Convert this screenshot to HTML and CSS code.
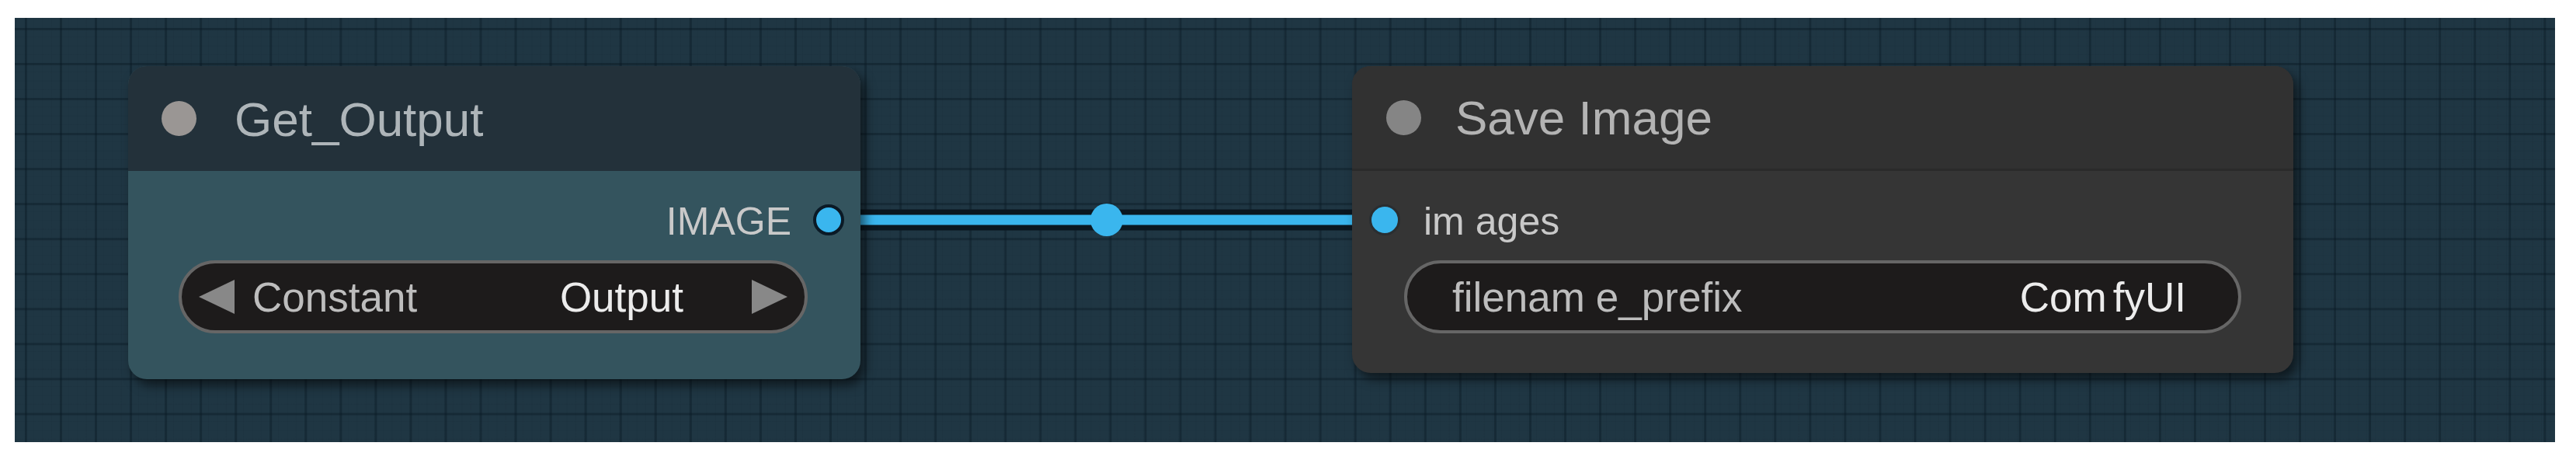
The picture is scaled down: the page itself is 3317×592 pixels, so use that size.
FILE: index.html
```html
<!DOCTYPE html>
<html>
<head>
<meta charset="utf-8">
<link rel="stylesheet" href="styles.css">
</head>
<body>
<div class="canvas">
  <svg class="links" width="3271" height="546" viewBox="0 0 3271 546">
    <line x1="1049" y1="260" x2="1764" y2="260" stroke="#0a1720" stroke-width="27"/>
    <line x1="1049" y1="260" x2="1764" y2="260" stroke="#3ab6ee" stroke-width="13"/>
    <circle cx="1406" cy="260" r="21" fill="#3ab6ee"/>
  </svg>

  <div class="node node-get">
    <div class="title">
      <span class="tdot"></span>
      <span class="ttext">Get_Output</span>
    </div>
    <div class="body">
      <div class="slot-row out">
        <span class="label">IMAGE</span>
        <span class="slot"></span>
      </div>
      <div class="widget combo">
        <span class="arrow left"></span>
        <span class="wname">Constant</span>
        <span class="wval">Output</span>
        <span class="arrow right"></span>
      </div>
    </div>
  </div>

  <div class="node node-save">
    <div class="title">
      <span class="tdot"></span>
      <span class="ttext">Save Image</span>
    </div>
    <div class="body">
      <div class="slot-row in">
        <span class="slot"></span>
        <span class="label">i<span class="mgap">m</span>ages</span>
      </div>
      <div class="widget text">
        <span class="wname">filena<span class="mgap">m</span>e_prefix</span>
        <span class="wval">Co<span class="mgap sm">m</span>fyUI</span>
      </div>
    </div>
  </div>
</div>
</body>
</html>
```

FILE: styles.css
```css
html, body {
  margin: 0;
  padding: 0;
  background: #ffffff;
}

body {
  padding: 23px 0 0 19px;
  font-family: "Liberation Sans", Arial, sans-serif;
}

.canvas {
  position: relative;
  width: 3271px;
  height: 546px;
  background-color: #1f3643;
  background-image:
    linear-gradient(to right, rgba(8, 24, 34, 0.4) 3px, transparent 3px),
    linear-gradient(to bottom, rgba(8, 24, 34, 0.4) 3px, transparent 3px),
    linear-gradient(to right, rgba(8, 24, 34, 0.07) 1px, transparent 1px),
    linear-gradient(to bottom, rgba(8, 24, 34, 0.07) 1px, transparent 1px);
  background-size: 45.06px 45.06px, 45.06px 45.06px, 11.265px 11.265px, 11.265px 11.265px;
  background-position: 13px 13px, 13px 13px, 13px 13px, 13px 13px;
  overflow: hidden;
}

.links {
  position: absolute;
  left: 0;
  top: 0;
}

.node {
  position: absolute;
  top: 62px;
  border-radius: 24px;
  overflow: hidden;
  display: flex;
  flex-direction: column;
  box-shadow: 6px 8px 14px rgba(0, 0, 0, 0.55);
}

.node-get {
  left: 146px;
  width: 943px;
  height: 403px;
  background: #34545e;
}

.node-save {
  left: 1722px;
  width: 1212px;
  height: 395px;
  background: #353535;
}

.title {
  height: 135px;
  display: flex;
  align-items: center;
  box-sizing: border-box;
}

.node-get .title {
  background: #23313a;
  padding-left: 43px;
}

.node-save .title {
  background: #313131;
  border-bottom: 3px solid #2a2a2a;
  padding-left: 44px;
}

.tdot {
  width: 45px;
  height: 45px;
  border-radius: 50%;
  flex: none;
}

.node-get .tdot {
  background: #9a9694;
  margin-right: 49px;
}

.node-save .tdot {
  background: #858585;
  margin-right: 44px;
}

.ttext {
  font-size: 62px;
  line-height: 1;
  margin-top: 2px;
}

.node-get .ttext {
  color: #aeb5b9;
}

.node-save .ttext {
  color: #b3b3b3;
}

.body {
  flex: 1;
  display: flex;
  flex-direction: column;
  padding-top: 20px;
}

.slot-row {
  height: 86px;
  display: flex;
  align-items: center;
}

.slot-row.out {
  justify-content: flex-end;
  padding-right: 21px;
}

.slot-row.in {
  padding-left: 22px;
}

.slot {
  width: 40px;
  height: 40px;
  box-sizing: border-box;
  border-radius: 50%;
  background: #3ab6ee;
  flex: none;
}

.out .slot {
  border: 4px solid #0b1a26;
  margin-left: 28px;
}

.in .slot {
  border: 3px solid #2a2e31;
  margin-right: 30px;
}

.label {
  font-size: 50px;
  line-height: 1;
  color: #c9c9c9;
  margin-top: 4px;
}

.mgap {
  margin-right: 14px;
}

.mgap.sm {
  margin-right: 8px;
}

.widget {
  height: 94px;
  box-sizing: border-box;
  border: 4px solid #666666;
  border-radius: 47px;
  background: #1d1b1b;
  display: flex;
  align-items: center;
  font-size: 53px;
  line-height: 1;
  margin-top: 9px;
}

.combo {
  margin-left: 65px;
  margin-right: 68px;
  padding: 0 22px;
}

.text {
  margin-left: 67px;
  margin-right: 67px;
  padding: 0 67px 0 58px;
}

.wname {
  color: #bdbdbd;
}

.wval {
  color: #ececec;
  margin-left: auto;
}

.combo .wname {
  margin-left: 23px;
}

.combo .wval {
  margin-right: 88px;
}

.arrow {
  width: 46px;
  height: 44px;
  background: #888888;
  flex: none;
}

.arrow.left {
  clip-path: polygon(0 50%, 100% 0, 100% 100%);
}

.arrow.right {
  clip-path: polygon(0 0, 100% 50%, 0 100%);
}
```
